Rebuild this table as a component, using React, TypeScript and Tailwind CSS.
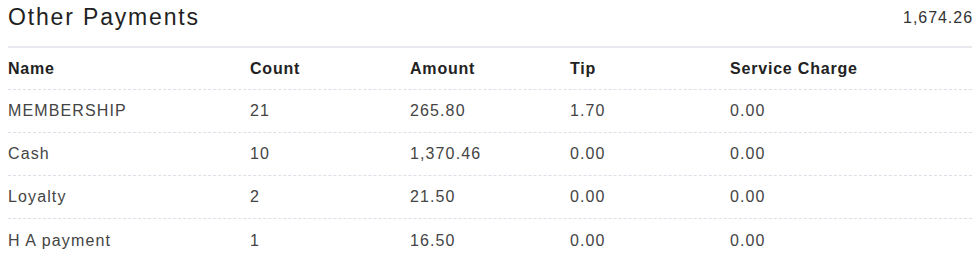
const rows = [
  { name: "MEMBERSHIP", count: "21", amount: "265.80", tip: "1.70", charge: "0.00" },
  { name: "Cash", count: "10", amount: "1,370.46", tip: "0.00", charge: "0.00" },
  { name: "Loyalty", count: "2", amount: "21.50", tip: "0.00", charge: "0.00" },
  { name: "H A payment", count: "1", amount: "16.50", tip: "0.00", charge: "0.00" },
];

function App() {
  return (
    <div className="w-[980px] h-[259px] bg-white px-2 font-['Liberation_Sans',_Arial,_sans-serif] overflow-hidden">
      <div className="flex items-center justify-between h-[34px] pt-[1px]">
        <h1 className="text-[23px] tracking-[0.08em] text-[#222] leading-none">Other Payments</h1>
        <span className="text-[16px] tracking-[0.06em] text-[#333] leading-none -mr-[1px]">1,674.26</span>
      </div>
      <div className="mt-[12px] border-t-2 border-[#e8e9ee]">
        <div className="grid grid-cols-[242px_160px_160px_160px_1fr] h-[42px] items-center border-b border-dashed border-[#dcdfe8] text-[16px] tracking-[0.05em] font-bold text-[#222]">
          <div>Name</div>
          <div>Count</div>
          <div>Amount</div>
          <div>Tip</div>
          <div>Service Charge</div>
        </div>
        {rows.map((row, i) => (
          <div
            key={row.name}
            className={`grid grid-cols-[242px_160px_160px_160px_1fr] h-[43px] items-center text-[16px] tracking-[0.07em] text-[#444] ${
              i < rows.length - 1 ? "border-b border-dashed border-[#dcdfe8]" : ""
            }`}
          >
            <div>{row.name}</div>
            <div>{row.count}</div>
            <div>{row.amount}</div>
            <div>{row.tip}</div>
            <div>{row.charge}</div>
          </div>
        ))}
      </div>
    </div>
  );
}

export default App;
